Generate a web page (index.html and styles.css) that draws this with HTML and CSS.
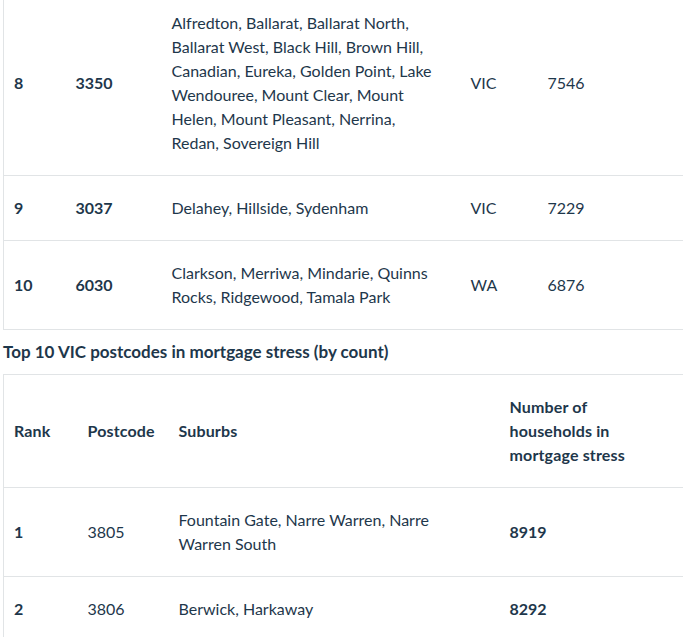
FILE: index.html
```html
<!DOCTYPE html>
<html lang="en">
<head>
<meta charset="utf-8">
<title>Mortgage stress postcodes</title>
<link rel="stylesheet" href="styles.css">
</head>
<body>
<div class="page">
  <table class="data t1">
    <colgroup>
      <col class="c-rank"><col class="c-post"><col class="c-sub"><col class="c-state"><col class="c-num">
    </colgroup>
    <tbody>
      <tr>
        <td class="b">8</td>
        <td class="b">3350</td>
        <td>Alfredton, Ballarat, Ballarat North, Ballarat West, Black Hill, Brown Hill, Canadian, Eureka, Golden Point, Lake Wendouree, Mount Clear, Mount Helen, Mount Pleasant, Nerrina, Redan, Sovereign Hill</td>
        <td>VIC</td>
        <td>7546</td>
      </tr>
      <tr>
        <td class="b">9</td>
        <td class="b">3037</td>
        <td>Delahey, Hillside, Sydenham</td>
        <td>VIC</td>
        <td>7229</td>
      </tr>
      <tr>
        <td class="b">10</td>
        <td class="b">6030</td>
        <td>Clarkson, Merriwa, Mindarie, Quinns Rocks, Ridgewood, Tamala Park</td>
        <td>WA</td>
        <td>6876</td>
      </tr>
    </tbody>
  </table>

  <h3 class="caption">Top 10 VIC postcodes in mortgage stress (by count)</h3>

  <table class="data t2">
    <colgroup>
      <col class="d-rank"><col class="d-post"><col class="d-sub"><col class="d-num">
    </colgroup>
    <thead>
      <tr>
        <th>Rank</th>
        <th>Postcode</th>
        <th>Suburbs</th>
        <th>Number of households in mortgage stress</th>
      </tr>
    </thead>
    <tbody>
      <tr>
        <td class="b">1</td>
        <td>3805</td>
        <td>Fountain Gate, Narre Warren, Narre Warren South</td>
        <td class="b">8919</td>
      </tr>
      <tr>
        <td class="b">2</td>
        <td>3806</td>
        <td>Berwick, Harkaway</td>
        <td class="b">8292</td>
      </tr>
    </tbody>
  </table>
</div>
</body>
</html>
```

FILE: styles.css
```css
html, body {
  margin: 0;
  padding: 0;
  background: #ffffff;
}

body {
  font-family: Lato, "Noto Sans", "Liberation Sans", sans-serif;
  font-size: 16px;
  line-height: 24px;
  color: #1e374b;
}

.page {
  width: 680px;
  margin: -10px 0 0 3px;
}

.data {
  width: 680px;
  border-collapse: collapse;
  table-layout: fixed;
  border: 1px solid #e1e4e6;
}

.data td,
.data th {
  padding: 20px 22px 20px 10px;
  border-top: 1px solid #e1e4e6;
  text-align: left;
  vertical-align: middle;
  font-weight: 400;
}

.data th {
  font-weight: 700;
  letter-spacing: 0.15px;
}

.data .b {
  font-weight: 700;
}

.c-rank { width: 62px; }
.c-post { width: 96px; }
.c-sub { width: 299px; }
.c-state { width: 77px; }
.c-num { width: 146px; }

.d-rank { width: 74px; }
.d-post { width: 91px; }
.d-sub { width: 331px; }
.d-num { width: 184px; }

.caption {
  margin: 10px 0 10px 0;
  font-size: 17px;
  line-height: 24px;
  font-weight: 700;
}
```
